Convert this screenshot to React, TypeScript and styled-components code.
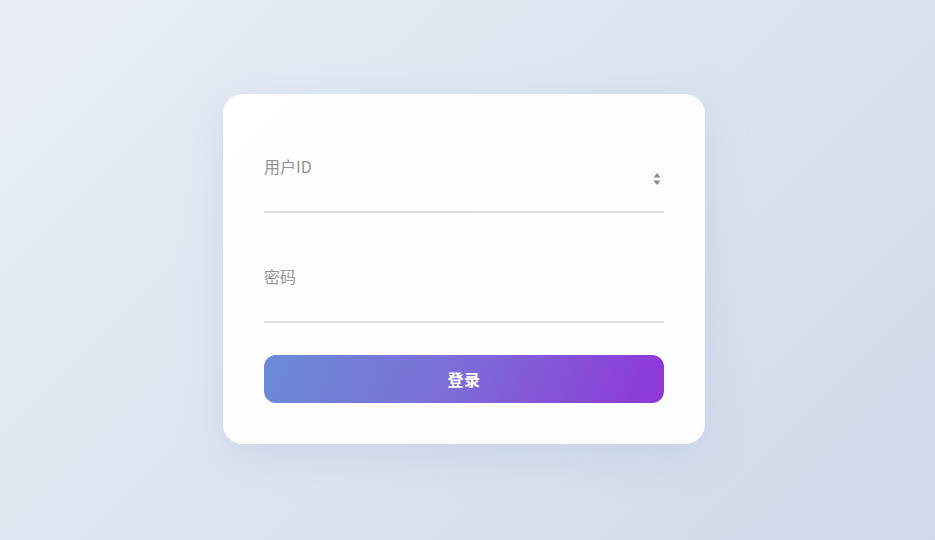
import React from "react";
import styled, { createGlobalStyle } from "styled-components";

const GlobalStyle = createGlobalStyle`
  html, body { margin: 0; padding: 0; }
  body {
    font-family: "Noto Sans CJK SC", "Noto Sans", "Liberation Sans", sans-serif;
  }
  * { box-sizing: border-box; }
`;

const Page = styled.div`
  width: 100vw;
  height: 540px;
  display: flex;
  align-items: center;
  justify-content: center;
  background: linear-gradient(135deg, #e9eef6 0%, #dde4ef 50%, #cfd9e8 100%);
`;

const Card = styled.form`
  width: 482px;
  padding: 41px;
  border-radius: 20px;
  background: linear-gradient(135deg, #ffffff 0%, #fdfcfe 100%);
  box-shadow: 0 10px 40px rgba(170, 185, 220, 0.35);
  display: flex;
  flex-direction: column;
  gap: 32px;
  margin: 0 7px 2px 0;
`;

const Field = styled.div`
  position: relative;
  height: 78px;
  border-bottom: 2px solid #dddddd;
`;

const Label = styled.label`
  position: absolute;
  left: 0;
  top: 20px;
  font-size: 16px;
  line-height: 22px;
  color: #929292;
  pointer-events: none;
`;

const Input = styled.input`
  display: block;
  width: 100%;
  height: 100%;
  border: none;
  outline: none;
  background: transparent;
  padding: 34px 20px 22px 0;
  font-size: 16px;
  color: #333;
  font-family: inherit;
`;

const Spinner = styled.div`
  position: absolute;
  right: 0;
  top: 35px;
  width: 14px;
  height: 18px;
  background: #fbfbfb;
  display: flex;
  align-items: center;
  justify-content: center;
`;

const Button = styled.button`
  height: 48px;
  border: none;
  border-radius: 12px;
  background: linear-gradient(110deg, #6a8bd6 0%, #7c6fd8 45%, #8f36d8 100%);
  color: #ffffff;
  font-family: inherit;
  font-size: 16px;
  font-weight: 700;
  letter-spacing: 0.5px;
  cursor: pointer;
`;

export default function App() {
  return (
    <>
      <GlobalStyle />
      <Page>
        <Card onSubmit={(e) => e.preventDefault()}>
          <Field>
            <Label htmlFor="uid">用户ID</Label>
            <Input id="uid" type="text" inputMode="numeric" />
            <Spinner>
              <svg width="8" height="14" viewBox="0 0 8 14">
                <path d="M4 1 L7.5 5.5 L0.5 5.5 Z" fill="#8a8a8a" />
                <path d="M0.5 8.5 L7.5 8.5 L4 13 Z" fill="#8a8a8a" />
              </svg>
            </Spinner>
          </Field>
          <Field>
            <Label htmlFor="pwd">密码</Label>
            <Input id="pwd" type="password" />
          </Field>
          <Button type="submit">登录</Button>
        </Card>
      </Page>
    </>
  );
}
